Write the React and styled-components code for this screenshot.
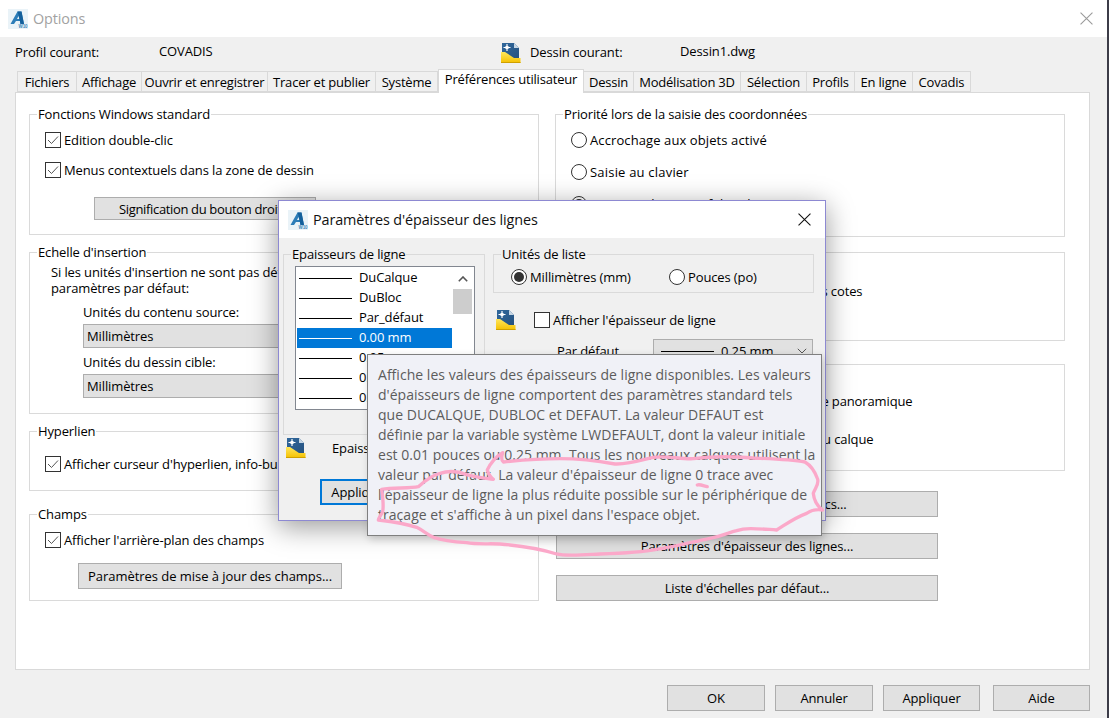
import React from "react";
import styled, { createGlobalStyle } from "styled-components";

const FONT = '"Open Sans", "Noto Sans", "Liberation Sans", sans-serif';

const GlobalStyle = createGlobalStyle`
  html, body {
    margin: 0;
    padding: 0;
    background: #f0f0f0;
  }
  * {
    box-sizing: border-box;
  }
`;

const Window = styled.div`
  position: relative;
  width: 1109px;
  height: 718px;
  overflow: hidden;
  display: flex;
  flex-direction: column;
  background: #f0f0f0;
  border-right: 2px solid #3c3c48;
  font-family: ${FONT};
  font-size: 13px;
  letter-spacing: -0.12px;
  color: #000;
`;

const TitleBar = styled.div`
  height: 37px;
  flex: none;
  display: flex;
  align-items: center;
  background: #fff;
  padding: 0 14px 0 8px;
`;

const WindowTitle = styled.div`
  margin-left: 5px;
  font-size: 14.4px;
  color: ${(p) => (p.$inactive ? "#a2a2a2" : "#111")};
  flex: 1;
`;

const Glyph = styled.svg`
  flex: none;
  display: block;
`;

const InfoRow = styled.div`
  height: 32px;
  flex: none;
  display: grid;
  grid-template-columns: 144px 342px 29px 150px 1fr;
  align-items: center;
  padding: 0 0 3px 15px;
`;

const InfoValue = styled.div`
  padding-bottom: ${(p) => (p.$raised ? 2 : 1)}px;
`;

const InfoIconSlot = styled.div`
  padding-top: 3px;
`;

const TabStrip = styled.div`
  height: 23px;
  flex: none;
  display: flex;
  align-items: flex-end;
  padding-left: 17px;
  position: relative;
  z-index: 1;
  letter-spacing: -0.2px;
`;

const Tab = styled.div`
  width: ${(p) => p.$w}px;
  height: ${(p) => (p.$active ? 24 : 21)}px;
  margin-bottom: ${(p) => (p.$active ? -1 : 0)}px;
  padding-top: ${(p) => (p.$active ? 0 : 1)}px;
  display: flex;
  justify-content: center;
  background: ${(p) => (p.$active ? "#fff" : "#f0f0f0")};
  border: 1px solid #d9d9d9;
  border-left-width: ${(p) => (p.$first || p.$active ? 1 : 0)}px;
  border-bottom: ${(p) => (p.$active ? "none" : "1px solid #d9d9d9")};
  white-space: nowrap;
`;

const TabPanel = styled.div`
  height: 578px;
  flex: none;
  margin: 0 17px 0 15px;
  padding: 21px 0 0 13px;
  background: #fff;
  border: 1px solid #d9d9d9;
  display: grid;
  grid-template-columns: 510px 510px;
  column-gap: 16px;
  align-content: start;
`;

const Column = styled.div`
  display: flex;
  flex-direction: column;
`;

const Group = styled.div`
  position: relative;
  flex: none;
  height: ${(p) => p.$h}px;
  margin-top: ${(p) => p.$mt || 0}px;
  padding: ${(p) => p.$pt || 0}px 0 0 ${(p) => p.$pl ?? 15}px;
  border: 1px solid #dadada;
`;

const Legend = styled.div`
  position: absolute;
  top: -10px;
  left: 7px;
  padding: 0 1px;
  height: 19px;
  line-height: 19px;
  white-space: nowrap;
  background: ${(p) => p.$bg || "#fff"};
`;

const Row = styled.div`
  height: ${(p) => p.$h || 30}px;
  margin-top: ${(p) => p.$mt || 0}px;
  display: flex;
  align-items: center;
  gap: 3px;
  white-space: nowrap;
  letter-spacing: ${(p) => (p.$ls === undefined ? "inherit" : `${p.$ls}px`)};
`;

const BoxMark = styled.span`
  flex: none;
  width: 16px;
  height: 16px;
  display: flex;
  align-items: center;
  justify-content: center;
  background: #fff;
  border: 1px solid #333;
`;

const RadioMark = styled.span`
  flex: none;
  width: 16px;
  height: 16px;
  display: flex;
  align-items: center;
  justify-content: center;
  background: #fff;
  border: 1px solid #333;
  border-radius: 50%;

  &::after {
    content: "";
    display: ${(p) => (p.$on ? "block" : "none")};
    width: 10px;
    height: 10px;
    border-radius: 50%;
    background: #333;
  }
`;

const Button = styled.div`
  flex: none;
  width: ${(p) => p.$w}px;
  height: ${(p) => p.$h || 26}px;
  margin-top: ${(p) => p.$mt || 0}px;
  margin-left: ${(p) => p.$ml || 0}px;
  display: flex;
  align-items: center;
  justify-content: center;
  background: #e1e1e1;
  border: ${(p) => (p.$focus ? "2px solid #0078d7" : "1px solid #adadad")};
  white-space: nowrap;
  letter-spacing: ${(p) => (p.$ls === undefined ? "inherit" : `${p.$ls}px`)};
`;

const Note = styled.div`
  padding-left: 21px;
  line-height: 16px;
  white-space: nowrap;
`;

const FieldLabel = styled.div`
  margin: ${(p) => p.$mt}px 0 4px 53px;
  line-height: 16px;
`;

const Combo = styled.div`
  width: 437px;
  height: 24px;
  margin-left: 53px;
  padding-left: 3px;
  display: flex;
  align-items: center;
  background: #e1e1e1;
  border: 1px solid #adadad;
`;

const SideButtons = styled.div`
  margin: 20px 0 0 1px;
  width: 382px;
  display: flex;
  flex-direction: column;
  gap: 16px;
`;

const Footer = styled.div`
  flex: 1;
  display: flex;
  align-items: flex-start;
  padding: 15px 0 0 667px;
`;

const FooterButton = styled(Button)`
  margin-right: ${(p) => p.$gap || 0}px;
`;

const Dialog = styled.div`
  position: absolute;
  left: 278px;
  top: 200px;
  width: 548px;
  height: 321px;
  display: flex;
  flex-direction: column;
  background: #f0f0f0;
  border: 1px solid #8d89d2;
  box-shadow: 0 6px 26px rgba(0, 0, 0, 0.4);
`;

const DialogTitle = styled.div`
  height: 37px;
  flex: none;
  display: flex;
  align-items: center;
  padding: 0 14px 0 9px;
  background: #fff;
`;

const DialogBody = styled.div`
  flex: 1;
  display: flex;
  gap: 8px;
  padding: 16px 0 0 4px;
`;

const DialogSide = styled.div`
  width: ${(p) => p.$w}px;
  flex: none;
`;

const ListBox = styled.div`
  width: 180px;
  height: 144px;
  display: flex;
  gap: 1px;
  padding: 1px 0 0 1px;
  background: #fff;
  border: 1px solid #828790;
  overflow: hidden;
`;

const ListRows = styled.div`
  width: 155px;
  flex: none;
`;

const ListRow = styled.div`
  height: 20px;
  display: flex;
  align-items: center;
  gap: 7px;
  padding-left: 2px;
  white-space: nowrap;
  background: ${(p) => (p.$selected ? "#0078d7" : "transparent")};
  color: ${(p) => (p.$selected ? "#fff" : "#000")};
`;

const ListLabel = styled.span`
  padding-bottom: 2px;
`;

const LineSample = styled.span`
  flex: none;
  width: 53px;
  height: 1px;
  background: ${(p) => (p.$selected ? "#fff" : "#000")};
`;

const Scrollbar = styled.div`
  width: 19px;
  flex: none;
  display: flex;
  flex-direction: column;
`;

const ScrollArrow = styled.div`
  height: 21px;
  display: flex;
  align-items: center;
  justify-content: center;
`;

const ScrollThumb = styled.div`
  height: 25px;
  background: #cdcdcd;
`;

const IconRow = styled.div`
  display: flex;
  align-items: center;
  margin: ${(p) => p.$mt || 0}px 0 0 3px;
  gap: ${(p) => p.$gap}px;
  white-space: nowrap;
`;

const UnitRow = styled.div`
  display: flex;
`;

const UnitSlot = styled.div`
  width: 158px;
  flex: none;
`;

const FieldRow = styled.div`
  margin-top: 9px;
  padding-left: 64px;
  display: flex;
  align-items: center;
`;

const FieldName = styled.div`
  width: 96px;
`;

const LineSelect = styled.div`
  width: 160px;
  height: 24px;
  display: flex;
  align-items: center;
  padding: 0 5px 0 7px;
  gap: 7px;
  background: #e1e1e1;
  border: 1px solid #adadad;
`;

const ChevronSlot = styled.span`
  margin-left: auto;
  display: flex;
`;

const Tooltip = styled.div`
  position: absolute;
  left: 367px;
  top: 354px;
  width: 455px;
  height: 182px;
  padding: 10px 0 0 10px;
  background: #f0f1f7;
  border: 1px solid #7f7f7f;
  box-shadow: 2px 3px 8px rgba(0, 0, 0, 0.18);
  color: #5c5c5c;
  font-size: 14px;
  line-height: 20px;
  letter-spacing: 0.03px;
`;

const TipLine = styled.span`
  display: block;
  white-space: nowrap;
`;

const InkOverlay = styled.svg`
  position: absolute;
  left: 0;
  top: 0;
  width: 1109px;
  height: 718px;
  pointer-events: none;
`;

function AppIcon() {
  return (
    <Glyph width="20" height="20" viewBox="0 0 20 20">
      <rect width="20" height="20" fill="#eaf3f8" />
      <path d="M2.5 15 L9.5 2.5 H13.5 L16 15 H12.5 L12 12 H8 L6 15 Z" fill="#2c7db8" />
      <path d="M9.5 2.5 H13.5 L16 15 H12.5 L10.6 6 Z" fill="#14609b" />
      <path d="M9 10 L10.6 7 L11.2 10 Z" fill="#eaf3f8" />
      <text x="10.5" y="19" fontSize="4.5" fontWeight="700" fill="#3f86b8" fontFamily="Liberation Sans, sans-serif">W10</text>
    </Glyph>
  );
}

function DrawingIcon() {
  return (
    <Glyph width="20" height="20" viewBox="0 0 20 20">
      <defs>
        <linearGradient id="sheet" x1="0" y1="0" x2="1" y2="1">
          <stop offset="0" stopColor="#31689c" />
          <stop offset="1" stopColor="#25517f" />
        </linearGradient>
        <linearGradient id="folder" x1="0" y1="0" x2="0" y2="1">
          <stop offset="0" stopColor="#ffe65c" />
          <stop offset="1" stopColor="#f4c000" />
        </linearGradient>
      </defs>
      <path d="M1 0 H13 L18 5 V16 H1 Z" fill="url(#sheet)" />
      <path d="M13 0 L18 5 H13 Z" fill="#c6d6e4" />
      <path d="M6 1 V8 M2.5 4.5 H9.5" stroke="#fff" strokeWidth="1.2" />
      <rect x="4.5" y="3" width="3" height="3" fill="#fff" />
      <path d="M0 9 H4 L13 15 H19.5 V20 H0 Z" fill="url(#folder)" />
      <path d="M0 19 H19.5 V20 H0 Z" fill="#cfa000" />
    </Glyph>
  );
}

function CloseIcon({ color, size }) {
  return (
    <Glyph width={size} height={size} viewBox="0 0 12 12">
      <path d="M0.5 0.5 L11.5 11.5 M11.5 0.5 L0.5 11.5" stroke={color} strokeWidth="1" fill="none" />
    </Glyph>
  );
}

function Chevron({ up }) {
  return (
    <Glyph width="10" height="6" viewBox="0 0 10 6">
      <path d={up ? "M0.8 5.2 L5 1 L9.2 5.2" : "M0.8 0.8 L5 5 L9.2 0.8"} stroke="#555" strokeWidth={up ? 1.6 : 1} fill="none" />
    </Glyph>
  );
}

function Check({ children, checked = true, mt }) {
  return (
    <Row $mt={mt}>
      <BoxMark>
        {checked && (
          <Glyph width="12" height="10" viewBox="0 0 12 10">
            <path d="M1 5 L4.5 8.5 L11 1.5" stroke="#555" strokeWidth="1" fill="none" />
          </Glyph>
        )}
      </BoxMark>
      {children}
    </Row>
  );
}

function Radio({ children, on, h, ls }) {
  return (
    <Row $h={h} $ls={ls}>
      <RadioMark $on={on} />
      {children}
    </Row>
  );
}

function UnitChoice({ children, on }) {
  return (
    <UnitSlot>
      <Radio h={22} on={on}>{children}</Radio>
    </UnitSlot>
  );
}

const TABS = [
  ["Fichiers", 60, false],
  ["Affichage", 65, false],
  ["Ouvrir et enregistrer", 126, false],
  ["Tracer et publier", 108, false],
  ["Système", 62, false],
  ["Préférences utilisateur", 146, true],
  ["Dessin", 50, false],
  ["Modélisation 3D", 107, false],
  ["Sélection", 66, false],
  ["Profils", 48, false],
  ["En ligne", 58, false],
  ["Covadis", 58, false],
];

const WEIGHTS = ["DuCalque", "DuBloc", "Par_défaut", "0.00 mm", "0.05 mm", "0.09 mm", "0.13 mm"];

const TIP_LINES = [
  "Affiche les valeurs des épaisseurs de ligne disponibles. Les valeurs",
  "d'épaisseurs de ligne comportent des paramètres standard tels",
  "que DUCALQUE, DUBLOC et DEFAUT. La valeur DEFAUT est",
  "définie par la variable système LWDEFAULT, dont la valeur initiale",
  "est 0.01 pouces ou 0.25 mm. Tous les nouveaux calques utilisent la",
  "valeur par défaut. La valeur d'épaisseur de ligne 0 trace avec",
  "l'épaisseur de ligne la plus réduite possible sur le périphérique de",
  "traçage et s'affiche à un pixel dans l'espace objet.",
];

// hand-drawn pink circle, points read from the 3x crop of the tooltip
const INK_PATH =
  "M400 388 C370 384 345 382 320 374 C295 364 265 362 240 370 C215 376 195 392 175 410 C150 416 100 412 65 418 " +
  "C68 440 72 465 68 485 C62 498 55 505 55 510 C90 514 140 522 170 532 C190 542 200 552 220 562 C250 572 290 576 320 578 " +
  "C350 584 390 580 420 582 C470 586 540 596 590 612 C620 620 680 614 720 612 C780 610 850 606 890 598 C950 590 1000 575 1050 565 " +
  "C1090 558 1105 548 1130 542 C1160 532 1190 536 1250 540 C1275 525 1300 505 1340 490 C1355 480 1375 478 1388 480 " +
  "C1372 468 1362 450 1360 430 C1365 415 1380 400 1372 385 C1365 365 1350 345 1335 336 C1290 328 1220 326 1180 324 " +
  "C1130 320 1060 318 1000 326 C960 328 920 316 880 322 C840 332 800 344 765 342 C720 334 660 326 600 326 " +
  "C540 326 470 332 430 336 C422 330 425 318 428 308 C410 318 390 340 382 360 C385 372 392 382 400 388";

function App() {
  return (
    <Window>
      <GlobalStyle />
      <TitleBar>
        <AppIcon />
        <WindowTitle $inactive>Options</WindowTitle>
        <CloseIcon color="#9a9a9a" size={13} />
      </TitleBar>

      <InfoRow>
        <div>Profil courant:</div>
        <InfoValue $raised>COVADIS</InfoValue>
        <InfoIconSlot>
          <DrawingIcon />
        </InfoIconSlot>
        <div>Dessin courant:</div>
        <InfoValue>Dessin1.dwg</InfoValue>
      </InfoRow>

      <TabStrip>
        {TABS.map(([label, w, active], i) => (
          <Tab key={label} $w={w} $active={active} $first={i === 0}>
            {label}
          </Tab>
        ))}
      </TabStrip>

      <TabPanel>
        <Column>
          <Group $h={121} $pt={10}>
            <Legend>Fonctions Windows standard</Legend>
            <Check>Edition double-clic</Check>
            <Check>Menus contextuels dans la zone de dessin</Check>
            <Button $w={222} $h={23} $mt={12} $ml={49} $ls={-0.35}>Signification du bouton droit...</Button>
          </Group>

          <Group $h={162} $mt={17} $pt={11} $pl={0}>
            <Legend>Echelle d'insertion</Legend>
            <Note>
              Si les unités d'insertion ne sont pas définies, utiliser les
              <br />
              paramètres par défaut:
            </Note>
            <FieldLabel $mt={8}>Unités du contenu source:</FieldLabel>
            <Combo>Millimètres</Combo>
            <FieldLabel $mt={6}>Unités du dessin cible:</FieldLabel>
            <Combo>Millimètres</Combo>
          </Group>

          <Group $h={60} $mt={17} $pt={17}>
            <Legend>Hyperlien</Legend>
            <Check>Afficher curseur d'hyperlien, info-bulle et menu contextuel</Check>
          </Group>

          <Group $h={87} $mt={23} $pt={10}>
            <Legend>Champs</Legend>
            <Check>Afficher l'arrière-plan des champs</Check>
            <Button $w={264} $mt={8} $ml={33} $ls={-0.04}>Paramètres de mise à jour des champs...</Button>
          </Group>
        </Column>

        <Column>
          <Group $h={123} $pt={9}>
            <Legend>Priorité lors de la saisie des coordonnées</Legend>
            <Radio h={32} ls={0.1}>Accrochage aux objets activé</Radio>
            <Radio h={32} ls={0.2}>Saisie au clavier</Radio>
            <Radio h={32} on>Saisie au clavier sauf dans les scripts</Radio>
          </Group>

          <Group $h={89} $mt={15} $pt={23}>
            <Check>Rendre associatives toutes les nouvelles cotes</Check>
          </Group>

          <Group $h={107} $mt={23} $pt={21} $pl={10}>
            <Check>Combiner les commandes de zoom et de panoramique</Check>
            <Check mt={8}>Combiner les changements d'attributs du calque</Check>
          </Group>

          <SideButtons>
            <Button $w={382}>Paramètres d'échelles des blocs...</Button>
            <Button $w={382}>Paramètres d'épaisseur des lignes...</Button>
            <Button $w={382}>Liste d'échelles par défaut...</Button>
          </SideButtons>
        </Column>
      </TabPanel>

      <Footer>
        <FooterButton $w={98} $gap={10}>OK</FooterButton>
        <FooterButton $w={98} $gap={10}>Annuler</FooterButton>
        <FooterButton $w={97} $gap={13}>Appliquer</FooterButton>
        <FooterButton $w={97}>Aide</FooterButton>
      </Footer>

      <Dialog>
        <DialogTitle>
          <AppIcon />
          <WindowTitle>Paramètres d'épaisseur des lignes</WindowTitle>
          <CloseIcon color="#111" size={13} />
        </DialogTitle>
        <DialogBody>
          <DialogSide $w={202}>
            <Group $h={181} $pt={11} $pl={11}>
              <Legend $bg="#f0f0f0">Epaisseurs de ligne</Legend>
              <ListBox>
                <ListRows>
                  {WEIGHTS.map((w) => (
                    <ListRow key={w} $selected={w === "0.00 mm"}>
                      <LineSample $selected={w === "0.00 mm"} />
                      <ListLabel>{w}</ListLabel>
                    </ListRow>
                  ))}
                </ListRows>
                <Scrollbar>
                  <ScrollArrow>
                    <Chevron up />
                  </ScrollArrow>
                  <ScrollThumb />
                </Scrollbar>
              </ListBox>
            </Group>
            <IconRow $mt={3} $gap={26}>
              <DrawingIcon />
              Epaisseur de ligne actuelle: 0.25 mm
            </IconRow>
            <Button $w={140} $mt={21} $ml={37} $focus>Appliquer et fermer</Button>
          </DialogSide>

          <DialogSide $w={321}>
            <Group $h={39} $pt={11} $pl={17}>
              <Legend $bg="#f0f0f0">Unités de liste</Legend>
              <UnitRow>
                <UnitChoice on>Millimètres (mm)</UnitChoice>
                <UnitChoice>Pouces (po)</UnitChoice>
              </UnitRow>
            </Group>
            <IconRow $mt={17} $gap={18}>
              <DrawingIcon />
              <Row $h={20}>
                <BoxMark />
                Afficher l'épaisseur de ligne
              </Row>
            </IconRow>
            <FieldRow>
              <FieldName>Par défaut</FieldName>
              <LineSelect>
                <LineSample />
                <span>0.25 mm</span>
                <ChevronSlot>
                  <Chevron />
                </ChevronSlot>
              </LineSelect>
            </FieldRow>
          </DialogSide>
        </DialogBody>
      </Dialog>

      <Tooltip>
        {TIP_LINES.map((line) => (
          <TipLine key={line}>{line}</TipLine>
        ))}
      </Tooltip>

      <InkOverlay viewBox="0 0 1109 718">
        <g transform="translate(360 350) scale(0.3333)" fill="none" stroke="#fba8c9" strokeWidth="10" strokeLinecap="round" strokeLinejoin="round">
          <path d={INK_PATH} />
          <path d="M1012 405 C1020 402 1032 408 1042 410" />
        </g>
      </InkOverlay>
    </Window>
  );
}

export default App;
